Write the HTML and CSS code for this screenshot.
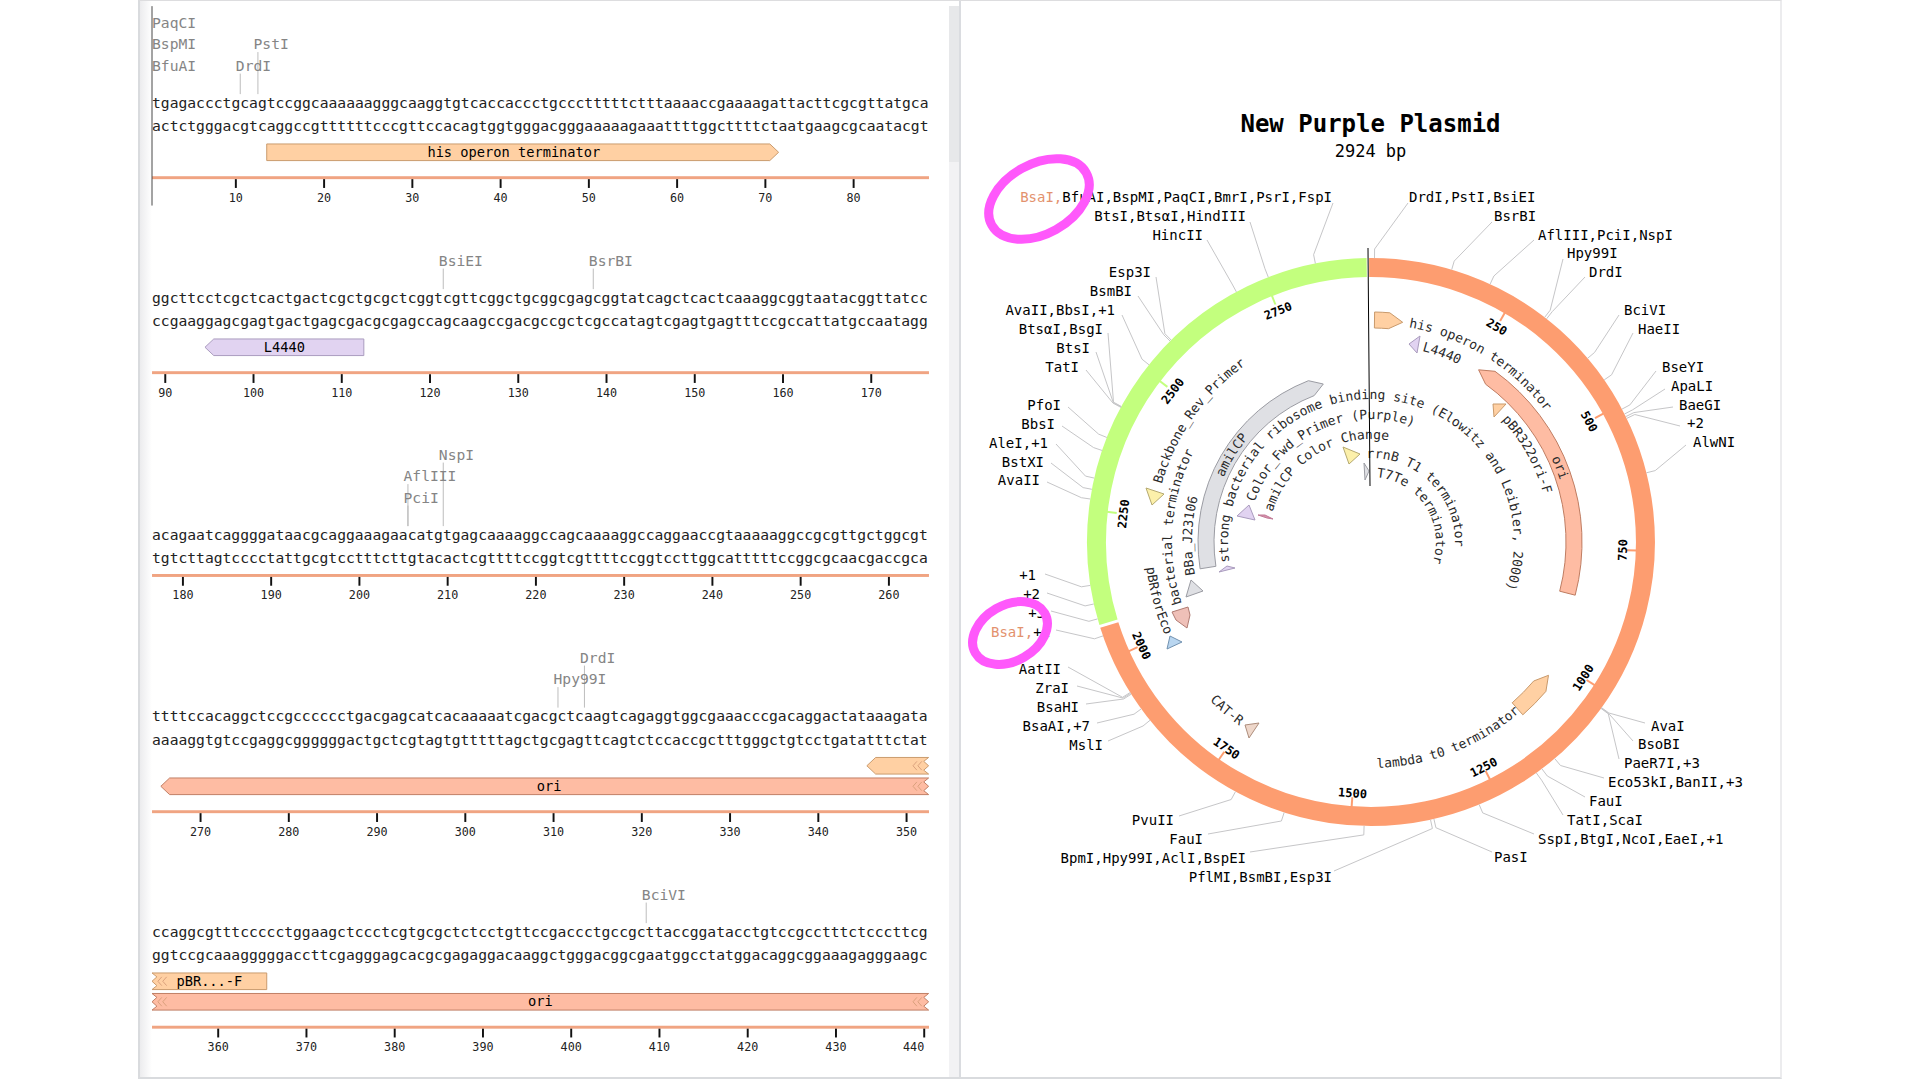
FILE: index.html
```
<!DOCTYPE html>
<html lang="en">
<head>
  <meta charset="UTF-8">
  <meta name="viewport" content="width=device-width, initial-scale=1.0">
  <title>New Purple Plasmid</title>
  <link rel="stylesheet" href="styles.css">
</head>
<body>
  <main class="viewer">
    <!-- Sequence Map -->
    <section class="sequence-panel" aria-label="Sequence map">
      <div class="sequence-rows" id="sequence-rows"></div>
      <div class="scrollbar"><div class="scrollbar-thumb"></div></div>
    </section>

    <!-- Plasmid Map -->
    <section class="plasmid-panel" aria-label="Plasmid map">
      <header>
        <h1>New Purple Plasmid</h1>
        <p>2924 bp</p>
      </header>
      <svg class="plasmid-map" id="plasmid-map" viewBox="-410 -372 819 720"></svg>
    </section>
  </main>

  <script src="script.js"></script>
</body>
</html>
```
FILE: styles.css
```
/* Global Styles */
* {
  margin: 0;
  padding: 0;
  box-sizing: border-box;
}
body {
  font-family: 'DejaVu Sans Mono', monospace;
  background-color: #fff;
  color: #000;
}
svg {
  display: block;
  width: 100%;
  overflow: visible;
}
.viewer {
  display: grid;
  grid-template-columns: 821fr 819fr;
  width: 86%;
  max-width: 1644px;
  min-height: calc(100vh - 1px);
  margin: 0 auto;
  border: 2px solid #d9dbde;
  border-top: 1px solid #dddddf;
  border-right-color: #ececee;
}

/* Sequence Map */
.sequence-panel {
  display: flex;
  gap: 20px;
  padding: 5px 0 0 12px;
  border-right: 2px solid #dadce0;
  background: linear-gradient(to right, #ececee, #fff 12px);
}
.sequence-rows {
  flex: 1;
  min-width: 0;
  display: flex;
  flex-direction: column;
  gap: 44px;
  padding: 7px 0 20px;
}
.scrollbar {
  width: 10px;
  background-color: #f2f2f4;
}
.scrollbar-thumb {
  height: 156px;
  background-color: #e7e8ea;
}
.site {
  font-size: 15px;
  fill: #858585;
}
.site-line {
  stroke: #bbb;
}
.strand {
  font-size: 15px;
  fill: #222;
}
.feature-name {
  font-size: 14px;
  text-anchor: middle;
}
.axis {
  fill: #f0a482;
}
.axis-tick {
  stroke: #111;
  stroke-width: 2px;
}
.axis-number {
  font-size: 12px;
  fill: #222;
  text-anchor: middle;
}
.axis-number.last {
  text-anchor: end;
}
.origin-line {
  stroke: #444;
}
.chevrons {
  fill: none;
  stroke: #d9a07c;
}

/* Feature Colors */
.peach { fill: #ffd0a3; stroke: #c99a6c; }
.salmon { fill: #febca3; stroke: #bf7d62; }
.purple { fill: #e1d3f1; stroke: #a99bbd; }
.gray { fill: #dfe0e4; stroke: #9b9ca3; }
.yellow { fill: #fcf0aa; stroke: #b5a970; }
.blue { fill: #b9d6f0; stroke: #7292b0; }
.red { fill: #efc0b8; stroke: #b07b72; }
.tan { fill: #eed7ca; stroke: #ad8d7c; }
.pink { fill: #d991ad; stroke: #c07a96; }

/* Plasmid Map */
.plasmid-panel {
  min-width: 0;
}
.plasmid-panel header {
  height: 169px;
  padding-top: 108px;
  text-align: center;
}
.plasmid-panel h1 {
  font-size: 24px;
  line-height: 30px;
}
.plasmid-panel p {
  font-size: 17px;
  line-height: 24px;
}
.ring {
  fill: none;
  stroke-width: 19px;
}
.ring.backbone {
  stroke: #fd9d70;
}
.ring.insert {
  stroke: #c3ff7e;
}
.ring-tick {
  stroke-width: 2px;
}
.ring-tick.backbone {
  stroke: #fd9d70;
}
.ring-tick.insert {
  stroke: #c3ff7e;
}
.ring-number {
  font-size: 12px;
  font-weight: bold;
  text-anchor: middle;
}
.ring-start {
  stroke: #000;
}
.arc-name {
  font-size: 13px;
  fill: #2a2a2a;
}
.arc-name.centered {
  text-anchor: middle;
}
.enzyme {
  font-size: 14px;
}
.enzyme.left {
  text-anchor: end;
}
.enzyme .cut {
  fill: #e3926e;
}
.leader {
  fill: none;
  stroke: #c6c6c8;
}
.marker {
  fill: none;
  stroke: #ff58fb;
  stroke-width: 9px;
}
```
FILE: script.js
```
const BASES_PER_ROW = 88;
const CH = 9.03; // width of one base at 15px
const ROW_WIDTH = 795;
const TOTAL = 2924;

// sites: [name, cut position, line (0 is closest to the bases)]
// features: [name, start, end, direction, lane, color, torn edges, name position]
const rows = [
  {
    seq: 'tgagaccctgcagtccggcaaaaaagggcaaggtgtcaccaccctgccctttttctttaaaaccgaaaagattacttcgcgttatgca',
    sites: [['PaqCI', 0, 2], ['BspMI', 0, 1], ['BfuAI', 0, 0], ['PstI', 12, 1], ['DrdI', 10, 0]],
    features: [['his operon terminator', 13, 71, 1, 0, 'peach', '', 41]]
  },
  {
    seq: 'ggcttcctcgctcactgactcgctgcgctcggtcgttcggctgcggcgagcggtatcagctcactcaaaggcggtaatacggttatcc',
    sites: [['BsiEI', 33, 0], ['BsrBI', 50, 0]],
    features: [['L4440', 6, 24, -1, 0, 'purple', '', 15]]
  },
  {
    seq: 'acagaatcaggggataacgcaggaaagaacatgtgagcaaaaggccagcaaaaggccaggaaccgtaaaaaggccgcgttgctggcgt',
    sites: [['NspI', 33, 2], ['AflIII', 29, 1], ['PciI', 29, 0]],
    features: []
  },
  {
    seq: 'ttttccacaggctccgcccccctgacgagcatcacaaaaatcgacgctcaagtcagaggtggcgaaacccgacaggactataaagata',
    sites: [['DrdI', 49, 1], ['Hpy99I', 46, 0]],
    features: [['', 81, 88, -1, 0, 'peach', 'r'], ['ori', 1, 88, -1, 1, 'salmon', 'r', 45]]
  },
  {
    seq: 'ccaggcgtttccccctggaagctccctcgtgcgctctcctgttccgaccctgccgcttaccggatacctgtccgcctttctcccttcg',
    sites: [['BciVI', 56, 0]],
    features: [['pBR...-F', 0, 13, 0, 0, 'peach', 'l', 6.5], ['ori', 0, 88, 0, 1, 'salmon', 'lr', 44]]
  }
];

const pairs = { a: 't', t: 'a', g: 'c', c: 'g' };

function complement(seq) {
  return seq.split('').map(base => pairs[base]).join('');
}

function chevrons(x, y) {
  return `<path class="chevrons" d="M${x + 4} ${y + 4}l-4 4.500 4 4.500M${x + 9} ${y + 4}l-4 4.500 4 4.500"/>`;
}

// Draw one feature bar under the strands
function drawFeature([name, start, end, dir, lane, color, torn, at], top) {
  const y = top + lane * 21;
  const x1 = start * CH;
  const x2 = end * CH;
  let right = `L${x2} ${y}V${y + 17}`;
  let left = `L${x1} ${y + 17}Z`;
  if (torn.includes('r')) right = `L${x2} ${y}l-5 4 5 4.500 -5 4.500 5 4`;
  else if (dir === 1) right = `L${x2 - 9} ${y}l9 8.500 -9 8.500`;
  if (torn.includes('l')) left = `L${x1} ${y + 17}l5 -4 -5 -4.500 5 -4.500Z`;
  else if (dir === -1) left = `L${x1 + 9} ${y + 17}l-9 -8.500Z`;
  const startX = dir === -1 ? x1 + 9 : x1;
  let out = `<path class="${color}" d="M${startX} ${y}${right}${left}"/>`;
  if (torn.includes('r')) out += chevrons(x2 - 16, y);
  if (torn.includes('l')) out += chevrons(x1 + 6, y);
  if (name) out += `<text class="feature-name" x="${at * CH}" y="${y + 13}">${name}</text>`;
  return out;
}

function drawRow(row, index) {
  const lines = Math.max(...row.sites.map(site => site[2])) + 1;
  const lanes = row.features.length ? Math.max(...row.features.map(f => f[4])) + 1 : 0;
  const siteY = 15 + (lines - 1) * 22;
  const topY = siteY + 38;
  const bottomY = topY + 24;
  const laneY = bottomY + 13;
  const axisY = lanes ? laneY + (lanes - 1) * 21 + 33 : bottomY + 11;
  const numberY = axisY + 27;
  let out = '';

  row.sites.forEach(([name, cut, line]) => {
    const y = siteY - line * 22;
    const x = cut * CH;
    if (cut) out += `<line class="site-line" x1="${x}" y1="${y + 3}" x2="${x}" y2="${topY - 14}"/>`;
    out += `<text class="site" x="${cut ? x - CH / 2 : 0}" y="${y}">${name}</text>`;
  });

  out += `<text class="strand" x="0" y="${topY}">${row.seq}</text>`;
  out += `<text class="strand" x="0" y="${bottomY}">${complement(row.seq)}</text>`;
  row.features.forEach(feature => { out += drawFeature(feature, laneY); });
  out += `<rect class="axis" x="0" y="${axisY}" width="${ROW_WIDTH}" height="3"/>`;

  const first = index * BASES_PER_ROW;
  for (let n = Math.ceil((first + 1) / 10) * 10; n <= first + BASES_PER_ROW; n += 10) {
    const x = (n - first - 0.5) * CH;
    const last = n === first + BASES_PER_ROW ? ' last' : '';
    out += `<line class="axis-tick" x1="${x}" y1="${axisY + 3}" x2="${x}" y2="${axisY + 12}"/>`;
    out += `<text class="axis-number${last}" x="${x}" y="${numberY - 1}">${n}</text>`;
  }
  if (index === 0) out += `<line class="origin-line" x1="0" y1="-7" x2="0" y2="${numberY + 3}"/>`;
  return `<svg viewBox="0 0 ${ROW_WIDTH} ${numberY + 4}">${out}</svg>`;
}

document.getElementById('sequence-rows').innerHTML = rows.map(drawRow).join('');

// Enzyme labels: [names, text x, baseline, leader x, leader y, angle on the ring]
const rightEnzymes = [
  ['DrdI,PstI,BsiEI', 38, -340, 37, -339, 0.7],
  ['BsrBI', 123, -321, 121, -320, 16.5],
  ['AflIII,PciI,NspI', 167, -302, 163, -302, 24.8],
  ['Hpy99I', 196, -284, 192, -283, 37.7],
  ['DrdI', 218, -265, 214, -265, 38.2],
  ['BciVI', 253, -227, 248, -227, 49.7],
  ['HaeII', 267, -208, 262, -209, 55.2],
  ['BseYI', 291, -170, 285, -171, 62.1],
  ['ApaLI', 300, -151, 294, -153, 63.2],
  ['BaeGI', 308, -132, 302, -135, 63.8],
  ['+2', 316, -114, 309, -116, 64.2],
  ['AlwNI', 322, -95, 315, -97, 75.9],
  ['AvaI', 280, 189, 274, 181, 125.7],
  ['BsoBI', 267, 207, 262, 199, 125.8],
  ['PaeR7I,+3', 253, 226, 248, 217, 125.9],
  ['Eco53kI,BanII,+3', 237, 245, 233, 236, 139.7],
  ['FauI', 218, 264, 214, 255, 143],
  ['TatI,ScaI', 196, 283, 192, 273, 144.4],
  ['SspI,BtgI,NcoI,EaeI,+1', 167, 302, 163, 292, 157.6],
  ['PasI', 123, 320, 121, 310, 167.2]
];
const leftEnzymes = [
  ['PflMI,BsmBI,Esp3I', -39, 340, -37, 329, 167.9],
  ['BpmI,Hpy99I,AclI,BspEI', -125, 321, -121, 310, 181.4],
  ['FauI', -168, 302, -163, 292, 197.8],
  ['PvuII', -197, 283, -192, 274, 208.5],
  ['MslI', -268, 208, -263, 199, 231.1],
  ['BsaAI,+7', -281, 189, -274, 181, 234],
  ['BsaHI', -292, 170, -285, 162, 237.6],
  ['ZraI', -302, 151, -294, 144, 237.8],
  ['AatII', -310, 132, -303, 125, 238],
  ['BsaI,+1', -321, 95, -315, 88, 250.7],
  ['+3', -326, 76, -320, 69, 254.3],
  ['+2', -331, 57, -324, 51, 257.4],
  ['+1', -335, 38, -326, 32, 261.2],
  ['AvaII', -331, -57, -324, -60, 278.7],
  ['BstXI', -327, -75, -320, -79, 280.7],
  ['AleI,+1', -323, -94, -315, -98, 283],
  ['BbsI', -316, -113, -309, -116, 288.8],
  ['PfoI', -310, -132, -303, -135, 291.6],
  ['TatI', -292, -170, -285, -172, 298.3],
  ['BtsI', -281, -189, -275, -190, 298.4],
  ['BtsαI,BsgI', -268, -208, -263, -209, 298.5],
  ['AvaII,BbsI,+1', -256, -227, -249, -227, 308.6],
  ['BsmBI', -239, -246, -233, -246, 315],
  ['Esp3I', -220, -265, -215, -265, 315.3],
  ['HincII', -168, -302, -164, -302, 331.7],
  ['BtsI,BtsαI,HindIII', -125, -321, -121, -320, 338.8],
  ['BsaI,BfuAI,BspMI,PaqCI,BmrI,PsrI,FspI', -39, -340, -38, -339, 348.7]
];

// Arrows along a lane: [color, lane radius, tail angle, shoulder angle, tip angle]
const arrows = [
  ['peach', 222, 0.9, 4.7, 8.2],
  ['salmon', 203, 104.6, 36, 32],
  ['peach', 222, 138.7, 130.5, 126.9],
  ['gray', 165, 261.1, 338.8, 343.2]
];

// Short features: [color, outline]
const shortFeatures = [
  ['purple', '49,-206 46,-189 38,-198'],
  ['peach', '122,-138 135,-138 123,-125'],
  ['tan', '-126,183 -112,181 -122,196'],
  ['blue', '-204,107 -201,94 -189,100'],
  ['yellow', '-225,-54 -207,-48 -219,-37'],
  ['red', '-199,70 -183,65 -181,73 -184,86 -195,78'],
  ['gray', '-180,38 -168,49 -185,55'],
  ['purple', '-152,30 -144,24 -136,26'],
  ['purple', '-122,-37 -116,-22 -134,-26'],
  ['pink', '-113,-27 -106,-27 -98,-23 -104,-24'],
  ['yellow', '-28,-95 -11,-88 -22,-78'],
  ['gray', '-7,-79 -2,-71 -6,-62']
];

// Curved names: [name, baseline radius, start angle, direction, centered]
const arcNames = [
  ['his operon terminator', 218, 10, 1],
  ['L4440', 198, 15, 1],
  ['ori', 199, 68.5, 1, true],
  ['pBR322ori-F', 179, 47, 1],
  ['lambda t0 terminator', 226, 178.5, -1],
  ['CAT-R', 226, 225.5, -1],
  ['pBRforEco', 226, 263.5, -1],
  ['Backbone_Rev_Primer', 217, 285.5, 1],
  ['bacterial terminator', 199, 252, 1],
  ['BBa_J23106', 179, 259.5, 1],
  ['amilCP', 161, 302, 1, true],
  ['strong bacterial ribosome binding site (Elowitz and Leibler, 2000)', 143, 262, 1],
  ['Color_Fwd_Primer (Purple)', 123, 289, 1],
  ['amilCP Color Change', 103, 287, 1],
  ['rrnB T1 terminator', 84, 357, 1],
  ['T7Te terminator', 65, 5, 1]
];

function polar(r, angle) {
  const rad = angle * Math.PI / 180;
  return (r * Math.sin(rad)).toFixed(1) + ' ' + (-r * Math.cos(rad)).toFixed(1);
}

function arc(r, from, to) {
  const large = Math.abs(to - from) > 180 ? 1 : 0;
  return `A${r} ${r} 0 ${large} ${to > from ? 1 : 0} ${polar(r, to)}`;
}

function drawEnzyme([names, x, y, lx, ly, angle], side) {
  const label = names.replace(/^BsaI,/, '<tspan class="cut">BsaI,</tspan>');
  return `<path class="leader" d="M${lx} ${ly}L${polar(293, angle)}L${polar(284, angle)}"/>
    <text class="enzyme ${side}" x="${x}" y="${y}">${label}</text>`;
}

function drawArrow([color, r, tail, shoulder, tip]) {
  const outer = r + 8;
  const inner = r - 8;
  return `<path class="${color}" d="M${polar(outer, tail)}${arc(outer, tail, shoulder)}L${polar(r, tip)}L${polar(inner, shoulder)}${arc(inner, shoulder, tail)}Z"/>`;
}

function drawArcName([name, r, angle, dir, centered], i) {
  const from = centered ? angle - 60 : angle;
  const to = centered ? angle + 60 : angle + dir * 230;
  const middle = centered ? ' startOffset="50%"' : '';
  return `<path id="arc-${i}" fill="none" d="M${polar(r, from)}${arc(r, from, to)}"/>
    <text class="arc-name${centered ? ' centered' : ''}"><textPath href="#arc-${i}"${middle}>${name}</textPath></text>`;
}

function drawRingNumber(n) {
  const angle = n / TOTAL * 360 - 0.5;
  const flipped = angle > 90 && angle < 270;
  const part = n > 2051 ? 'insert' : 'backbone';
  const turn = flipped ? angle - 180 : angle;
  const y = flipped ? 256 : -245;
  return `<path class="ring-tick ${part}" d="M${polar(266, angle)}L${polar(256, angle)}"/>
    <text class="ring-number" y="${y}" transform="rotate(${turn.toFixed(1)})">${n}</text>`;
}

let map = `<path class="ring backbone" d="M${polar(274.5, -0.4)}${arc(274.5, -0.4, 252.4)}"/>
  <path class="ring insert" d="M${polar(274.5, 253)}${arc(274.5, 253, 359.1)}"/>`;
for (let n = 250; n < TOTAL; n += 250) map += drawRingNumber(n);
map += arrows.map(drawArrow).join('');
map += shortFeatures.map(([color, points]) => `<polygon class="${color}" points="${points}"/>`).join('');
map += arcNames.map(drawArcName).join('');
map += rightEnzymes.map(e => drawEnzyme(e, 'right')).join('');
map += leftEnzymes.map(e => drawEnzyme(e, 'left')).join('');
map += '<line class="ring-start" x1="-3" y1="-294" x2="-1" y2="-56"/>';
map += '<ellipse class="marker" rx="54" ry="35" transform="translate(-332 -343) rotate(-29)"/>';
map += '<ellipse class="marker" rx="40" ry="28" transform="translate(-361 91) rotate(-30)"/>';
document.getElementById('plasmid-map').innerHTML = map;
```
